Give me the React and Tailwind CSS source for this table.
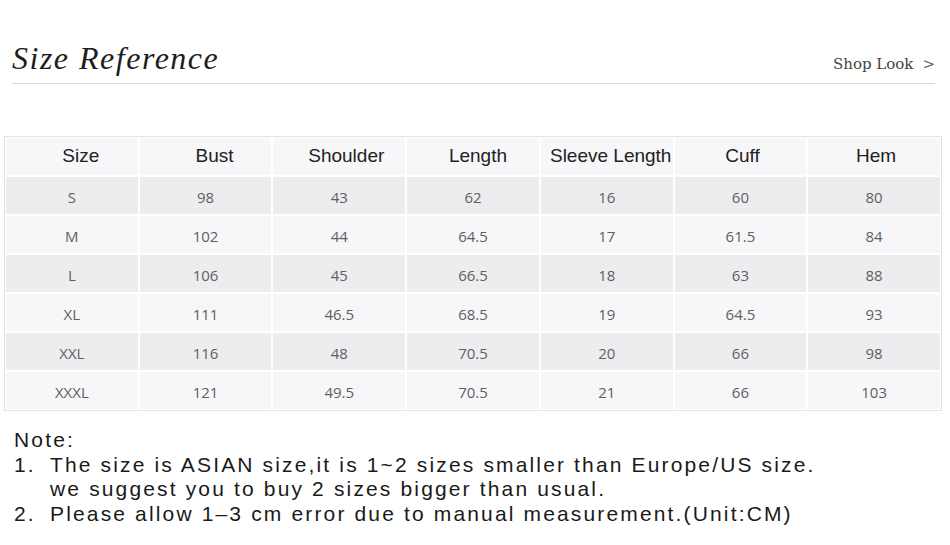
export default function App() {
  const headers = ["Size", "Bust", "Shoulder", "Length", "Sleeve Length", "Cuff", "Hem"];
  const headerPad = ["pl-[18px]", "pl-[18px]", "pl-[14px]", "pl-[10px]", "pl-[8px]", "pl-[4px]", "pl-[4px]"];
  const rows = [
    ["S", "98", "43", "62", "16", "60", "80"],
    ["M", "102", "44", "64.5", "17", "61.5", "84"],
    ["L", "106", "45", "66.5", "18", "63", "88"],
    ["XL", "111", "46.5", "68.5", "19", "64.5", "93"],
    ["XXL", "116", "48", "70.5", "20", "66", "98"],
    ["XXXL", "121", "49.5", "70.5", "21", "66", "103"],
  ];

  return (
    <div className="w-[950px] h-[545px] bg-white overflow-hidden">
      {/* Title bar */}
      <div className="mx-[12px] mt-[40px] flex items-end justify-between border-b border-[#d9d9d9] pb-[6px] w-[923px]">
        <div className="font-['Liberation_Serif',serif] italic text-[32px] leading-[37px] text-[#1e1e1e] tracking-[1.5px]">
          Size Reference
        </div>
        <div className="font-['DejaVu_Serif',serif] text-[15px] text-[#444] pb-[2px] flex items-center gap-[9px]">
          <span>Shop Look</span>
          <span className="text-[#666]">&gt;</span>
        </div>
      </div>

      {/* Table */}
      <div className="ml-[4px] mt-[52px] w-[938px] border border-[#e3e2e6] bg-white p-[1px]">
        <div className="grid grid-cols-7 gap-[2px]">
          {headers.map((h, j) => (
            <div
              key={h}
              className={`h-[37px] flex items-center justify-center bg-[#f7f6f9] font-['Liberation_Sans',sans-serif] text-[19px] text-[#222] ${headerPad[j]}`}
            >
              {h}
            </div>
          ))}
          {rows.map((r, i) =>
            r.map((c, j) => (
              <div
                key={i + "-" + j}
                className={`h-[37px] flex items-center justify-center pt-[3px] font-['Open_Sans',sans-serif] text-[15px] text-[#5f5f5f] ${
                  i % 2 === 0 ? "bg-[#ededef]" : "bg-[#f7f6f9]"
                }`}
              >
                {c}
              </div>
            ))
          )}
        </div>
      </div>

      {/* Notes */}
      <div className="ml-[14px] mt-[17px] font-['Liberation_Sans',sans-serif] text-[21px] leading-[24.5px] tracking-[2.15px] text-[#1a1a1a]">
        <div>Note:</div>
        <div className="flex">
          <span className="w-[36px] shrink-0">1.</span>
          <div>
            <div>The size is ASIAN size,it is 1~2 sizes smaller than Europe/US size.</div>
            <div>we suggest you to buy 2 sizes bigger than usual.</div>
          </div>
        </div>
        <div className="flex">
          <span className="w-[36px] shrink-0">2.</span>
          <div>Please allow 1&#8211;3 cm error due to manual measurement.(Unit:CM)</div>
        </div>
      </div>
    </div>
  );
}
